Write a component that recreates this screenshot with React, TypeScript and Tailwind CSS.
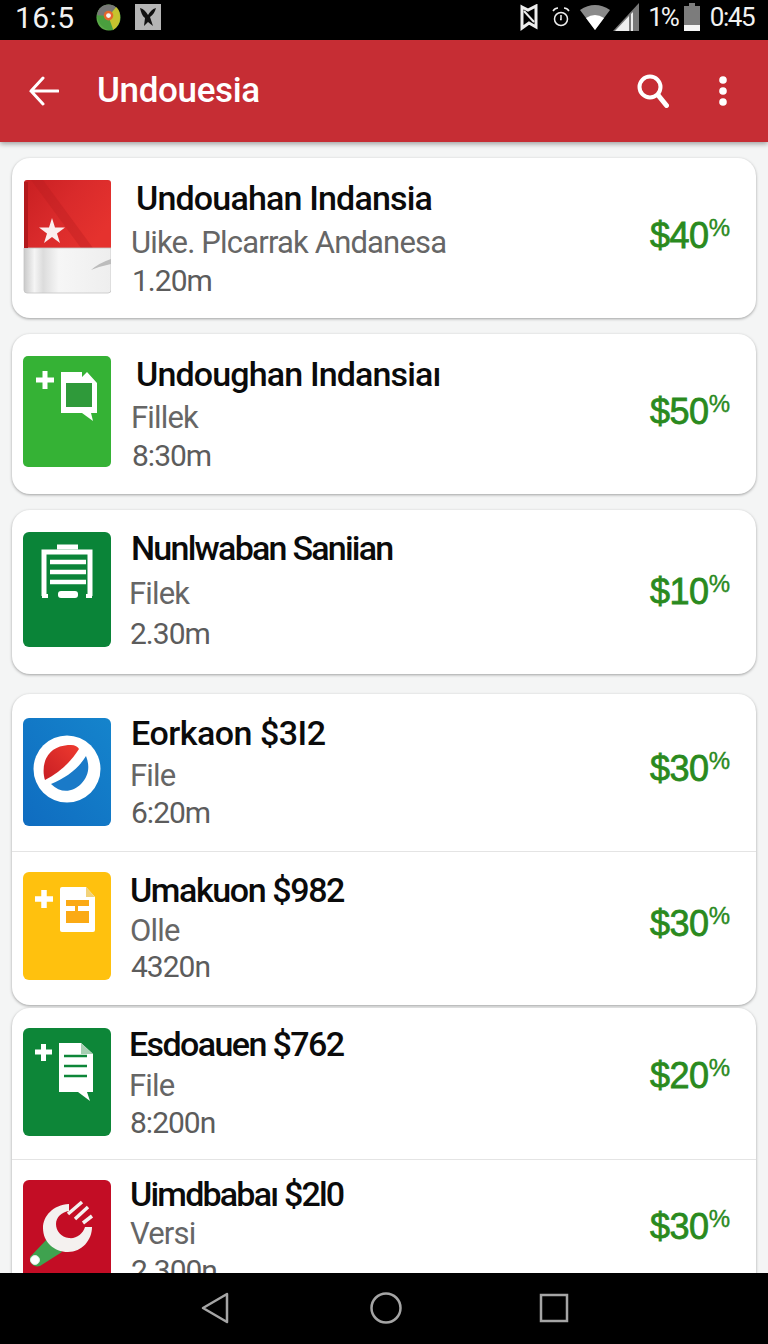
import { ReactNode } from 'react'

function FlagIcon() {
  return (
    <svg viewBox="0 0 88 114" className="w-[88px] h-[114px] shrink-0">
      <defs>
        <linearGradient id="flagRed" x1="0" y1="0" x2="1" y2="0.6">
          <stop offset="0" stopColor="#c81f22" />
          <stop offset="0.5" stopColor="#d92a2b" />
          <stop offset="1" stopColor="#e5322e" />
        </linearGradient>
        <linearGradient id="flagWhite" x1="0" y1="0" x2="1" y2="0">
          <stop offset="0" stopColor="#c9c9c9" />
          <stop offset="0.12" stopColor="#f5f5f5" />
          <stop offset="0.22" stopColor="#dcdcdc" />
          <stop offset="0.4" stopColor="#f6f6f6" />
          <stop offset="1" stopColor="#eeeeee" />
        </linearGradient>
      </defs>
      <path d="M1 3a3 3 0 0 1 3-3h81a3 3 0 0 1 3 3v65H1z" fill="url(#flagRed)" />
      <path d="M8 0l50 68h12L20 0z" fill="#b81c20" opacity="0.35" />
      <path d="M1 68h87v42a3 3 0 0 1-3 3H4a3 3 0 0 1-3-3z" fill="url(#flagWhite)" stroke="#c4c4c4" strokeWidth="0.800" />
      <path d="M1 2h4v66H1z" fill="#b3191c" />
      <path d="M68 90q8-7 20-11v5q-10 2-20 6z" fill="#bcbcbc" />
      <path d="M29 38l3 9.500h10l-8 5.900 3 9.600-8-5.900-8 5.900 3-9.600-8-5.900h10z" fill="#fbeeee" />
    </svg>
  )
}

function GreenDocIcon() {
  return (
    <svg viewBox="0 0 88 111" className="w-[88px] h-[111px] shrink-0">
      <rect width="88" height="111" rx="5" fill="#35b235" />
      <path d="M13 24h18M22 15v18" stroke="#fff" strokeWidth="5" />
      <path d="M38 16h21v5l5-5 10 11v30H38z" fill="#fff" />
      <rect x="43" y="27" width="26" height="24" fill="#2f9a3a" />
      <path d="M59 57l11 8-2-8z" fill="#fff" />
    </svg>
  )
}

function ClipboardIcon() {
  return (
    <svg viewBox="0 0 88 115" className="w-[88px] h-[115px] shrink-0">
      <rect width="88" height="115" rx="6" fill="#0a8438" />
      <path d="M21 64V20h46v44" fill="none" stroke="#fff" strokeWidth="5" />
      <path d="M34 15h21" stroke="#fff" strokeWidth="5" />
      <path d="M27 30h36M27 40h36M27 50h36" stroke="#fff" strokeWidth="4.500" />
      <path d="M19 64h6M63 64h6" stroke="#fff" strokeWidth="4" />
      <rect x="35" y="59" width="20" height="7" rx="3" fill="#fff" />
    </svg>
  )
}

function PepsiIcon() {
  return (
    <svg viewBox="0 0 88 108" className="w-[88px] h-[108px] shrink-0">
      <defs>
        <linearGradient id="pepsiBg" x1="1" y1="0" x2="0" y2="1">
          <stop offset="0" stopColor="#1584cc" />
          <stop offset="1" stopColor="#0f6cc0" />
        </linearGradient>
        <linearGradient id="pepsiRed" x1="0" y1="1" x2="1" y2="0">
          <stop offset="0" stopColor="#c81e24" />
          <stop offset="1" stopColor="#ee3a2f" />
        </linearGradient>
      </defs>
      <rect width="88" height="108" rx="6" fill="url(#pepsiBg)" />
      <circle cx="44" cy="51" r="33.500" fill="#fff" />
      <path d="M22 62C18 50 21 27 48 27c4 0 7 2 8 4-9 14-20 24-34 31z" fill="url(#pepsiRed)" />
      <path d="M28 66c15-6 28-16 35-28 4 10 3 20-5 28-8 8-20 10-30 0z" fill="#1a7ac8" />
    </svg>
  )
}

function YellowDocIcon() {
  return (
    <svg viewBox="0 0 88 108" className="w-[88px] h-[108px] shrink-0">
      <rect width="88" height="108" rx="6" fill="#ffc10e" />
      <path d="M12 27h18M21 18v18" stroke="#fff" strokeWidth="5.500" />
      <path d="M39 15h24l9 10v33a2 2 0 0 1-2 2H39a2 2 0 0 1-2-2V17a2 2 0 0 1 2-2z" fill="#fff" />
      <path d="M43 28h23v6H43zM52 34h3v5h11v12H43V39h9z" fill="#fbaa14" />
      <path d="M63 15l9 10h-9z" fill="#f2d27a" />
    </svg>
  )
}

function NotesIcon() {
  return (
    <svg viewBox="0 0 88 108" className="w-[88px] h-[108px] shrink-0">
      <rect width="88" height="108" rx="6" fill="#0d8638" />
      <path d="M12 24h17M20.500 16v17" stroke="#fff" strokeWidth="5" />
      <path d="M36 15h22l12 11v38H36z" fill="#fff" />
      <path d="M58 15l12 11H58z" fill="#a6cfb2" />
      <path d="M41 28h23M41 38h23M41 48h23" stroke="#0d8638" strokeWidth="2.500" />
      <path d="M55 64l12 9-3-9z" fill="#fff" />
    </svg>
  )
}

function WrenchIcon() {
  return (
    <svg viewBox="0 0 88 110" className="w-[88px] h-[110px] shrink-0">
      <rect width="88" height="110" rx="6" fill="#c30d25" />
      <path d="M26 57L7 77c-1 6 4 11 10 9l22-14z" fill="#3fa24f" />
      <circle cx="12" cy="80" r="4.500" fill="#fff" stroke="#dfeee0" />
      <path d="M46 24C30 25 20 36 20 48c0 14 11 24 25 24 14 0 24-12 24-25h-7c-2 7-9 12-16 11-8-1-13-7-13-14s6-12 13-13z" fill="#f4f1ef" />
      <path d="M59 22L45 34M65 27L52 39M69 36l-9 7" stroke="#f4f1ef" strokeWidth="3.500" />
    </svg>
  )
}

const rows = [
  { title: 'Undouahan Indansia', sub: 'Uike. Plcarrak Andanesa', time: '1.20m', price: '$40', icon: <FlagIcon />, h: 'h-[160px]', iconTop: 'mt-[22px] ml-[11px]', textBox: 'mt-[20px] ml-[20px]', titleCls: 'pl-[5px] tracking-[-0.83px]', subMt: 'mt-[7px]', timeMt: 'mt-[2px]', priceMt: 'mt-[58px]' },
  { title: 'Undoughan Indansiaı', sub: 'Fillek', time: '8:30m', price: '$50', icon: <GreenDocIcon />, h: 'h-[160px]', iconTop: 'mt-[22px] ml-[11px]', textBox: 'mt-[20px] ml-[20px]', titleCls: 'pl-[5px] tracking-[-0.85px]', subMt: 'mt-[6px]', timeMt: 'mt-[2px]', priceMt: 'mt-[58px]' },
  { title: 'Nunlwaban Saniian', sub: 'Filek', time: '2.30m', price: '$10', icon: <ClipboardIcon />, h: 'h-[164px]', iconTop: 'mt-[22px] ml-[11px]', textBox: 'mt-[18px] ml-[18px]', titleCls: 'pl-[2px] tracking-[-1.76px]', subMt: 'mt-[8px]', timeMt: 'mt-[4px]', priceMt: 'mt-[62px]' },
  { title: 'Eorkaon $3I2', sub: 'File', time: '6:20m', price: '$30', icon: <PepsiIcon />, h: 'h-[157px]', iconTop: 'mt-[24px] ml-[11px]', textBox: 'mt-[19px] ml-[19px]', titleCls: 'pl-[1px] tracking-[-0.5px]', subMt: 'mt-[5px]', timeMt: 'mt-[1px]', priceMt: 'mt-[55px]' },
  { title: 'Umakuon $982', sub: 'Olle', time: '4320n', price: '$30', icon: <YellowDocIcon />, h: 'h-[154px]', iconTop: 'mt-[20px] ml-[11px]', textBox: 'mt-[18px] ml-[19px]', titleCls: 'tracking-[-1.4px]', subMt: 'mt-[3px]', timeMt: 'mt-0', priceMt: 'mt-[52px]' },
  { title: 'Esdoauen $762', sub: 'File', time: '8:200n', price: '$20', icon: <NotesIcon />, h: 'h-[151px]', iconTop: 'mt-[20px] ml-[11px]', textBox: 'mt-[16px] ml-[18px]', titleCls: 'tracking-[-1.6px]', subMt: 'mt-[4px]', timeMt: 'mt-[1px]', priceMt: 'mt-[48px]' },
  { title: 'Uimdbabaı $2l0', sub: 'Versi', time: '2.300n', price: '$30', icon: <WrenchIcon />, h: 'h-[150px]', iconTop: 'mt-[20px] ml-[11px]', textBox: 'mt-[14px] ml-[19px]', titleCls: 'tracking-[-1.8px]', subMt: 'mt-[2px]', timeMt: 'mt-[1px]', priceMt: 'mt-[47px]' },
]

type RowData = (typeof rows)[number]

function Row({ row, divider }: { row: RowData; divider?: boolean }) {
  return (
    <div className={`flex items-start overflow-hidden ${row.h} ${divider ? 'border-t border-[#e4e4e4]' : ''}`}>
      <div className={row.iconTop}>{row.icon}</div>
      <div className={`flex-1 min-w-0 flex flex-col ${row.textBox}`}>
        <div className={`h-[40px] leading-[40px] text-[34px] font-medium text-[#0b0b0b] whitespace-nowrap ${row.titleCls}`}>{row.title}</div>
        <div className={`h-[36px] leading-[36px] text-[31px] text-[#666666] whitespace-nowrap tracking-[-0.83px] ${row.subMt}`}>{row.sub}</div>
        <div className={`h-[36px] leading-[36px] pl-[1px] text-[30px] text-[#5c5c5c] whitespace-nowrap tracking-[-1px] ${row.timeMt}`}>{row.time}</div>
      </div>
      <div className={`flex items-start pr-[26px] text-[#2a8a1e] font-['Liberation_Sans',sans-serif] ${row.priceMt}`}>
        <span className="text-[36px] leading-[40px] tracking-[-0.5px] [-webkit-text-stroke:0.8px_#2a8a1e]">{row.price}</span>
        <span className="text-[24px] leading-[24px] [-webkit-text-stroke:0.4px_#2a8a1e]">%</span>
      </div>
    </div>
  )
}

function Card({ className, children }: { className: string; children: ReactNode }) {
  return (
    <div className={`mx-[12px] bg-white rounded-[18px] shadow-[0_1px_3px_rgba(0,0,0,0.35)] overflow-hidden shrink-0 ${className}`}>
      {children}
    </div>
  )
}

function StatusBar() {
  return (
    <div className="h-[40px] bg-black flex items-center pl-[15px] pr-[14px] pb-[6px] text-[#f2f2f2] text-[28px] shrink-0">
      <span className="w-[59px] text-[30px] tracking-[0.4px]">16:5</span>
      <svg viewBox="0 0 26 28" className="w-[25px] h-[27px] ml-[22px]">
        <ellipse cx="13" cy="14" rx="12.500" ry="13.500" fill="#5ba848" />
        <path d="M1 12C2 4 7 .5 13 .5c3 0 6 1 8 3l-8 9z" fill="#777" />
        <path d="M1 12l12 .5 5 14.500c-8 2-16-6-17-15z" fill="#4a9f3e" />
        <path d="M21 3c3 3 4 6 4 11 0 6-3 10-7 13l-5-14z" fill="#c6c32e" />
        <circle cx="13" cy="12" r="5" fill="#e4662c" />
        <circle cx="13" cy="12" r="2.500" fill="#f5f5f5" />
      </svg>
      <svg viewBox="0 0 26 26" className="w-[26px] h-[26px] ml-[14px]">
        <rect width="26" height="26" fill="#b5b5b5" />
        <path d="M5 4c4 1 6 4 8 7 2-3 4-6 8-7-1 4-3 7-6 9l3 9-5-4-4 4 1-8C7 12 6 8 5 4z" fill="#111" />
      </svg>
      <div className="flex-1" />
      <svg viewBox="0 0 18 27" className="w-[18px] h-[27px]">
        <path d="M2 3l6 3 8-4v21l-7-4-7 5z" fill="none" stroke="#eee" strokeWidth="3" />
        <path d="M4 7l10 11" stroke="#eee" strokeWidth="2" />
      </svg>
      <svg viewBox="0 0 18 24" className="w-[18px] h-[24px] ml-[14px]">
        <circle cx="9" cy="14" r="6.500" fill="none" stroke="#eee" strokeWidth="1.500" />
        <path d="M9 10v4.500h-1M1 6q2-3 5-3M17 6q-2-3-5-3" fill="none" stroke="#eee" strokeWidth="1.500" />
      </svg>
      <svg viewBox="0 0 30 26" className="w-[30px] h-[26px] ml-[10px]">
        <path d="M0 6Q15-4 30 6L15 26z" fill="#8a8a8a" />
        <path d="M6 14q9-6 18 0l-9 12z" fill="#fff" />
      </svg>
      <svg viewBox="0 0 26 28" className="w-[26px] h-[28px] ml-[3px]">
        <path d="M0 28L26 0v28z" fill="#777" />
        <path d="M2 28l14-15v15zM18 11l2-2v19h-2z" fill="#eee" />
      </svg>
      <span className="ml-[9px] text-[26px] tracking-[-2px]">1%</span>
      <svg viewBox="0 0 16 28" className="w-[16px] h-[28px] ml-[6px]">
        <path d="M5 0h6v3h5v25H0V3h5z" fill="#7c7c7c" />
        <rect y="22" width="16" height="6" fill="#f5f5f5" />
      </svg>
      <span className="ml-[10px] text-[26px] tracking-[-1.500px]">0:45</span>
    </div>
  )
}

function AppBar() {
  return (
    <div className="relative h-[102px] bg-[#c62d34] flex items-center shadow-[0_2px_5px_rgba(0,0,0,0.35)] shrink-0">
      <svg viewBox="0 0 30 30" className="w-[30px] h-[30px] ml-[29px]" fill="none" stroke="#fff" strokeWidth="3" strokeLinecap="round">
        <path d="M29 15H2M14 2L2 15l12 13" />
      </svg>
      <span className="ml-[38px] mt-[1px] text-white text-[35px] font-medium tracking-[-0.35px]">Undouesia</span>
      <div className="flex-1" />
      <svg viewBox="0 0 32 34" className="w-[32px] h-[34px]" fill="none" stroke="#fff" strokeLinecap="round">
        <circle cx="13" cy="13" r="10.500" strokeWidth="4" />
        <path d="M21 21l8.500 10.500" strokeWidth="5" />
      </svg>
      <svg viewBox="0 0 10 30" className="w-[10px] h-[30px] ml-[49px] mr-[40px]" fill="#fff">
        <circle cx="5" cy="4" r="3.800" />
        <circle cx="5" cy="15" r="3.800" />
        <circle cx="5" cy="26" r="3.800" />
      </svg>
    </div>
  )
}

function NavBar() {
  return (
    <div className="h-[71px] bg-black flex items-center shrink-0 pb-[1px]">
      <svg viewBox="0 0 28 32" className="w-[28px] h-[32px] ml-[201px]" fill="none" stroke="#a5a5a5" strokeWidth="2.500" strokeLinejoin="round">
        <path d="M26 2L2 16l24 14z" />
      </svg>
      <svg viewBox="0 0 32 32" className="w-[32px] h-[32px] ml-[141px]" fill="none" stroke="#a5a5a5" strokeWidth="2.500">
        <circle cx="16" cy="16" r="14.500" />
      </svg>
      <svg viewBox="0 0 30 30" className="w-[30px] h-[30px] ml-[137px]" fill="none" stroke="#a5a5a5" strokeWidth="2.500">
        <rect x="2" y="2" width="26" height="26" />
      </svg>
    </div>
  )
}

export default function App() {
  return (
    <div className="w-[768px] h-[1344px] flex flex-col overflow-hidden bg-[#f4f5f5] font-['Roboto',sans-serif]">
      <StatusBar />
      <AppBar />
      <main className="flex-1 min-h-0 overflow-hidden flex flex-col pt-[16px]">
        <Card className="">
          <Row row={rows[0]} />
        </Card>
        <Card className="mt-[16px]">
          <Row row={rows[1]} />
        </Card>
        <Card className="mt-[16px]">
          <Row row={rows[2]} />
        </Card>
        <Card className="mt-[20px]">
          <Row row={rows[3]} />
          <Row row={rows[4]} divider />
        </Card>
        <Card className="mt-[3px]">
          <Row row={rows[5]} />
          <Row row={rows[6]} divider />
        </Card>
      </main>
      <NavBar />
    </div>
  )
}
